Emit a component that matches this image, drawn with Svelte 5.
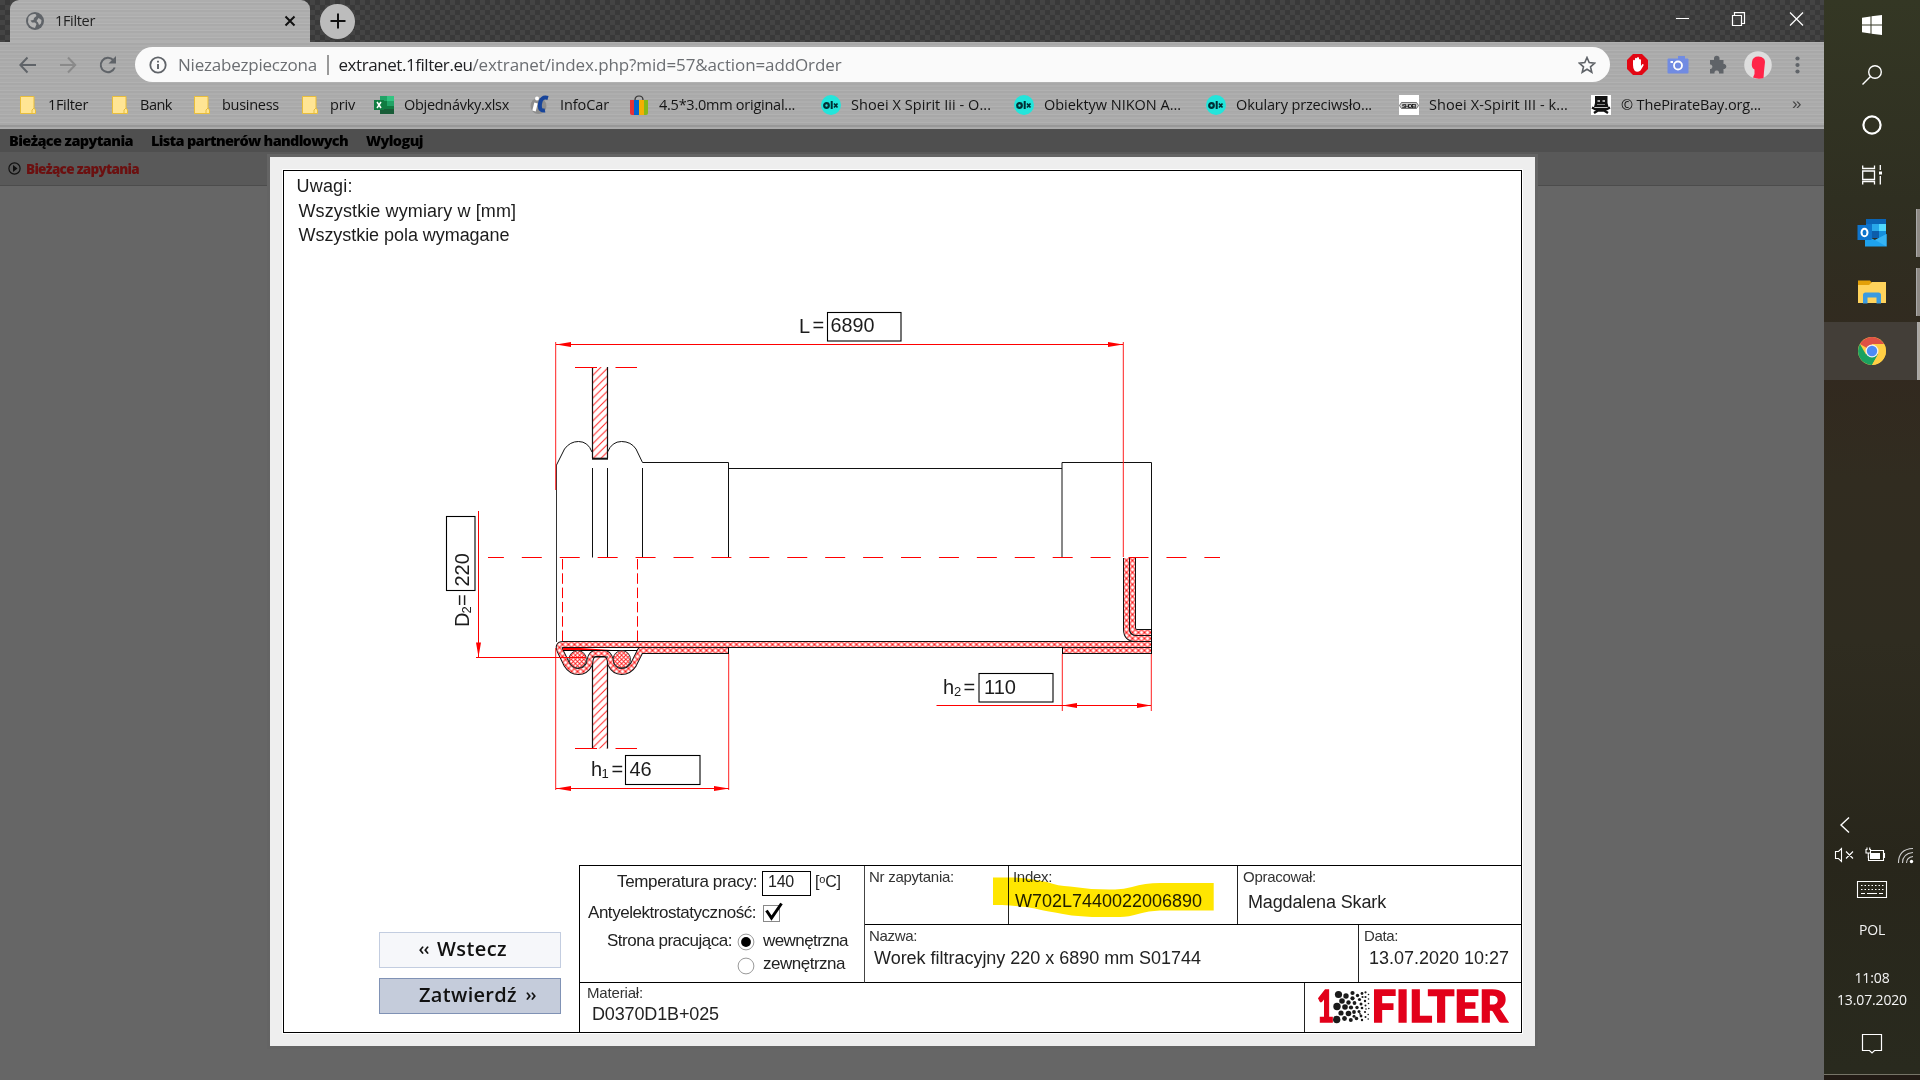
<script>
  // Spreads the letters of a label evenly so that it takes up the given width.
  function fit(node, width) {
    const natural = node.getBoundingClientRect().width;
    node.style.letterSpacing = (width - natural) / node.textContent.length + 'px';
  }

  const bookmarks = [
    { icon: 'folder', text: '1Filter', w: 40 },
    { icon: 'folder', text: 'Bank', w: 32 },
    { icon: 'folder', text: 'business', w: 57 },
    { icon: 'folder', text: 'priv', w: 25 },
    { icon: 'excel', text: 'Objednávky.xlsx', w: 105 },
    { icon: 'car', text: 'InfoCar', w: 49 },
    { icon: 'ebay', text: '4.5*3.0mm original...', w: 136 },
    { icon: 'olx', text: 'Shoei X Spirit Iii - O...', w: 140 },
    { icon: 'olx', text: 'Obiektyw NIKON A...', w: 137 },
    { icon: 'olx', text: 'Okulary przeciwsło...', w: 136 },
    { icon: 'shoei', text: 'Shoei X-Spirit III - k...', w: 139 },
    { icon: 'pirate', text: '© ThePirateBay.org...', w: 140 }
  ];

  // Particle cloud of the logo: x, y, radius.
  const dots = [
    [1338.5, 994.5, 3.6], [1346, 996, 2.7], [1352.5, 993, 2.1], [1357.5, 995.5, 1.7], [1362, 993.5, 1.4],
    [1342, 1001, 2.8], [1348.5, 1002.5, 2.2], [1352.5, 998.3, 2.1], [1359.5, 999.5, 1.6], [1365.5, 992.3, 1.1],
    [1337, 1006.5, 3.7], [1345, 1007, 2.8], [1351, 1007.5, 2.1], [1354.5, 1003, 1.9], [1357, 1007.5, 1.7],
    [1341, 1013, 2.6], [1348.5, 1013.5, 2.8], [1354, 1012, 1.9], [1359, 1011.5, 1.5], [1361, 1004, 1.5],
    [1336.7, 1019.5, 3.7], [1344.5, 1018.5, 2.4], [1350.8, 1020, 2], [1356.5, 1018.5, 1.8], [1354, 1016.3, 1.5],
    [1361, 1016, 1.4], [1362, 1020, 1.2], [1365, 1001, 1.2], [1365.5, 997, 1.1], [1362.5, 997, 1.1],
    [1362, 1008, 1.3], [1365.5, 1005.5, 1], [1365, 1012, 1.1], [1365.5, 1017, 1], [1368.5, 994.5, 0.8],
    [1368.5, 999, 0.8], [1368.5, 1003.5, 0.8], [1368.8, 1008.5, 0.8], [1368.2, 1014.5, 0.8], [1368.2, 1019, 0.8],
    [1360, 1013.8, 0.9], [1366, 1009, 0.8]
  ];

  const seal =
    'M729 650.5H640.5L633.5 664.5Q629 671.5 621.5 671.5Q614.5 671.5 610.8 664L610.3 660Q608.5 653.5 604 653.5H596Q591.5 653.5 590 660L589.5 664Q585.5 671.5 578.5 671.5Q571 671.5 566.8 664.5L560 650.5Q557.5 644.5 563 644.5H1151';
  const cap1 = 'M1126.5 558V629Q1126.5 638.5 1136 638.5H1151';
  const cap2 = 'M1132.5 558V628Q1132.5 632.5 1137 632.5H1151';
</script>

<div class="screen">
  <div class="browser">
    <div class="tabs">
      <div class="tab">
        <svg class="globe" width="18" height="18" viewBox="0 0 18 18"><circle cx="9" cy="9" r="9" fill="#5f6368" /><path d="M2.500 5Q5 1.500 9.500 2L10.500 4L8 6L7.500 8L4.500 8.500L6 10.500H9L10.500 12L9 16Q3 15 2 10ZM12.500 6L15.500 8L15 11.500L13 13L12 10.500L10.500 9Z" fill="#b5b5b5" /></svg>
        <span class="ui title" use:fit={40}>1Filter</span>
        <svg width="12" height="12" viewBox="0 0 12 12"><path d="M1.500 1.500L10.500 10.500M10.500 1.500L1.500 10.500" stroke="#111" stroke-width="2" /></svg>
      </div>
      <div class="plus"><svg width="16" height="16" viewBox="0 0 16 16"><path d="M8 0.500V15.500M0.500 8H15.500" stroke="#111" stroke-width="2" /></svg></div>
      <svg class="winctl" width="128" height="14" viewBox="0 0 128 14" fill="none" stroke="#fff" stroke-width="1.200"><path d="M0 6.500H13M114 0.500L127 13.500M127 0.500L114 13.500" /><path d="M56.500 3.500H65.500V13.500H56.500ZM58.500 3V0.700H68.500V11.500H66" /></svg>
    </div>

    <div class="toolbar">
      <svg class="nav" width="108" height="20" viewBox="0 0 108 20" fill="none" stroke-width="2">
        <path d="M17 10H1.500M8.500 2.500L1.300 10L8.500 17.500" stroke="#5f6368" />
        <path d="M41 10H56M49 2.500L56.200 10L49 17.500" stroke="#8a8a8a" />
        <path d="M94.200 5A7.200 7.200 0 1 0 95.700 12.500" stroke="#5f6368" /><path d="M97 1V8.500H89.500Z" fill="#5f6368" />
      </svg>
      <div class="address">
        <svg width="18" height="18" viewBox="0 0 18 18"><circle cx="9" cy="9" r="7.700" fill="none" stroke="#5f6368" stroke-width="1.800" /><path d="M9 8V13M9 4.800V6.600" stroke="#5f6368" stroke-width="1.900" /></svg>
        <span class="ui insecure" use:fit={139}>Niezabezpieczona</span>
        <i class="sep"></i>
        <span class="ui host" use:fit={134}>extranet.1filter.eu</span><span class="ui path" use:fit={369}>/extranet/index.php?mid=57&amp;action=addOrder</span>
        <svg class="star" width="18" height="18" viewBox="0 0 18 18"><path d="M9 1.500L11.200 6.600L16.700 7.100L12.500 10.800L13.800 16.200L9 13.300L4.200 16.200L5.500 10.800L1.300 7.100L6.800 6.600Z" fill="none" stroke="#5f6368" stroke-width="1.600" /></svg>
      </div>
      <svg class="ext" width="190" height="34" viewBox="1620 48 190 34">
        <path d="M1633 54H1642L1648 60V69L1642 75H1633L1627 69V60Z" fill="#e30613" />
        <path d="M1633 65V60.500Q1634 59 1635 60.500V58.500Q1636 57 1637 58.500V58Q1638 56 1639 58V59.500Q1640 58.500 1641 60V66L1642.500 64Q1644 63.500 1643.500 65.500L1640.500 70.500Q1637 73 1634.500 70.500Q1633 69 1633 65Z" fill="#fff" />
        <rect x="1667.500" y="58.500" width="21" height="15" rx="1" fill="#718be2" /><rect x="1678" y="56" width="7" height="3" fill="#718be2" /><rect x="1670.500" y="61" width="2.500" height="2" fill="#fff" /><circle cx="1678" cy="65.500" r="4" fill="#718be2" stroke="#fff" stroke-width="1.800" />
        <path d="M1710 60H1714V58.500A2.600 2.600 0 0 1 1719.500 58.500V60H1723.500V64H1724.500A2.600 2.600 0 0 1 1724.500 69H1723.500V73.500H1719V72A2.500 2.500 0 0 0 1714.500 72V73.500H1710V69H1711A2.500 2.500 0 0 0 1711 64.500H1710Z" fill="#5f6368" />
        <circle cx="1758" cy="65" r="13.800" fill="#dedede" /><path d="M1752 62Q1752.500 56.500 1758.500 56.500Q1765 57 1765 62L1764 71.500L1763.500 78Q1758 79.500 1753 77.500L1754.500 74V69.500Q1751 68 1752 62Z" fill="#ff2448" />
        <circle cx="1797.500" cy="58.500" r="2.100" fill="#5f6368" /><circle cx="1797.500" cy="65" r="2.100" fill="#5f6368" /><circle cx="1797.500" cy="71.500" r="2.100" fill="#5f6368" />
      </svg>
    </div>

    <div class="bookmarks">
      {#each bookmarks as b}
        <div class="bm">
          <svg width="20" height="20" viewBox="0 0 20 20">
            {#if b.icon === 'folder'}
              <path d="M2.500 1.500H16V13L17.500 15V18.500H2.500Z" fill="#ffe594" stroke="#e8bd3b" /><path d="M14 18.500V15L16 13" fill="none" stroke="#e8bd3b" />
            {:else if b.icon === 'excel'}
              <path d="M6 1H20V19H6Z" fill="#107c41" /><path d="M6 1H13V6H6Z" fill="#21a366" /><path d="M13 1H20V6H13Z" fill="#33c481" /><path d="M13 6H20V11H13Z" fill="#21a366" /><path d="M6 14H20V19H6Z" fill="#185c37" /><path d="M0 5H10V15H0Z" fill="#107c41" /><path d="M3 7L7 13M7 7L3 13" stroke="#fff" stroke-width="1.500" />
            {:else if b.icon === 'car'}
              <circle cx="8.500" cy="11" r="8" fill="#8e8e8e" /><path d="M6 8L4 16" stroke="#fff" stroke-width="3.500" /><circle cx="7" cy="3.500" r="2" fill="#fff" /><path d="M18 3Q11 1 10 9Q9 16.500 15 15.500" fill="none" stroke="#17449a" stroke-width="4" />
            {:else if b.icon === 'ebay'}
              <path d="M1 5H5.500V20H3Q1 20 1 18Z" fill="#e53238" /><path d="M5 5H10V20H5Z" fill="#0064d2" /><path d="M10 5H15V20H10Z" fill="#f5af02" /><path d="M15 5H19V18Q19 20 17 20H15Z" fill="#86b817" /><path d="M6 5Q6 1 10 1Q14 1 14 5" fill="none" stroke="#333" stroke-width="1.200" />
            {:else if b.icon === 'olx'}
              <circle cx="10" cy="10" r="10" fill="#23e5db" /><circle cx="5.500" cy="10.500" r="2.300" fill="none" stroke="#002f34" stroke-width="2.200" /><path d="M10.700 6V14" stroke="#002f34" stroke-width="2" /><path d="M13 8.500L16.500 12.500M16.500 8.500L13 12.500" stroke="#002f34" stroke-width="1.700" />
            {:else if b.icon === 'shoei'}
              <path d="M0 0H20V20H0Z" fill="#fff" /><path d="M2.500 7.500H17.500L19.500 10.500L17.500 13.500H2.500L0.500 10.500Z" fill="#ccc" stroke="#555" stroke-width="0.800" /><text x="3" y="12.500" font-size="5.500" font-weight="bold" textLength="14">SHOEI</text>
            {:else}
              <path d="M0 0H20V20H0Z" fill="#fff" /><path d="M4 1H16.500V8L17.500 12H3L4 8Z" fill="#111" /><path d="M6.500 5H9V7H6.500ZM11.500 5H14V7H11.500ZM6 9H14V9.800H6Z" fill="#aaa" /><path d="M1 12.500L4 14H16L19 12.500M3 18L7 15.500H13L17 18" fill="none" stroke="#111" stroke-width="2.400" />
            {/if}
          </svg>
          <span class="ui" use:fit={b.w}>{b.text}</span>
        </div>
      {/each}
      <span class="more">»</span>
    </div>

    <div class="page">
      <nav class="menu">
        <b use:fit={124}>Bieżące zapytania</b><b use:fit={197}>Lista partnerów handlowych</b><b use:fit={57}>Wyloguj</b>
      </nav>
      <div class="submenu">
        <svg width="13" height="13" viewBox="0 0 13 13"><circle cx="6.500" cy="6.500" r="5.600" fill="none" stroke="#111" stroke-width="1.200" /><path d="M5 3L9.500 6.500L5 10Z" fill="#111" /></svg>
        <b use:fit={113}>Bieżące zapytania</b>
      </div>

      <div class="modal">
        <div class="frame">
          <svg class="drawing" width="1237" height="694" viewBox="284 171 1237 694">
            <defs>
              <pattern id="cross" width="6" height="6" patternUnits="userSpaceOnUse" x="1.500" y="641.500"><path d="M-1 -1L7 7M7 -1L-1 7" stroke="#ff1010" stroke-width="1.050" /></pattern>
              <pattern id="fine" width="4.200" height="4.200" patternUnits="userSpaceOnUse"><path d="M-1 -1L5.200 5.200M5.200 -1L-1 5.200" stroke="#ff1a1a" stroke-width="0.900" /></pattern>
              <pattern id="wall" width="7.600" height="7.600" patternUnits="userSpaceOnUse" x="592.500" y="368"><path d="M-1 8.600L8.600 -1M-1 1L1 -1M6.600 8.600L8.600 6.600" stroke="#ff2020" stroke-width="1" /></pattern>
            </defs>

            <g class="lbl">
              <text x="296.500" y="192" textLength="56">Uwagi:</text>
              <text x="298.500" y="217" textLength="217.500">Wszystkie wymiary w [mm]</text>
              <text x="298.500" y="241" textLength="211">Wszystkie pola wymagane</text>
            </g>

            <path d="M592.500 367H607.500V458H592.500ZM592.500 657H607.500V748.500H592.500Z" fill="url(#wall)" />
            <g fill="none" stroke="#111" stroke-width="1">
              <path d="M556.500 465V642" stroke="#333" />
              <path d="M592.500 367V458M607.500 367V458M592.500 657V748.500M607.500 657V748.500" stroke-width="1.200" />
              <path d="M592 458.700H608" stroke-width="2" />
              <path d="M556.500 465L564.500 449Q570 441.500 578.500 441.500Q588 441.500 592 452M607.500 452Q612 441.500 621.500 441.500Q631 441.500 636 449L642.500 462.500H728.500V557.500M728.500 468.500H1062M1062 557.500V462.500H1151.500V654M592.500 468V557.500M607.500 468V557.500M642.500 468V557.500" />
              <path d="M1135.500 557.500V629.500M1129.500 557.500V629" />
            </g>

            <path class="ink" d="M1062 650.500H1151.500" /><path class="gap" d="M1063 650.500H1151" /><path class="hatch" d="M1063 650.500H1151" />
            <path class="ink" d={cap1} /><path class="gap" d={cap1} /><path class="hatch" d={cap1} />
            <path class="ink" d={cap2} /><path class="gap" d={cap2} /><path class="hatch" d={cap2} />
            <path class="ink" d={seal} /><path class="gap" d={seal} /><path class="hatch" d={seal} />
            <path d="M728.500 647V654M1062.500 647V654M1151.500 629V654M592 657H608M563 650.500H637" stroke="#000" />
            <path d="M563 648H580L612 650H563Z" fill="#f00" />
            <circle cx="577.700" cy="659.300" r="8.700" fill="url(#fine)" stroke="#333" stroke-width="1" />
            <circle cx="621.800" cy="659.300" r="8.700" fill="url(#fine)" stroke="#333" stroke-width="1" />

            <g fill="none" stroke="#f00" stroke-width="1">
              <path d="M555.700 342V490M555.700 648V790M728.700 654V790M1062.300 654V711M1151.300 654V711M1123.300 342V557" stroke="#ff2020" />
              <path d="M556 344.500H1123M556 788.500H729M936.500 705.500H1151M478.500 511V657M476 657.500H586" />
              <path d="M575 367.500H597M615.500 367.500H637M575 748.500H597M615.500 748.500H637" />
              <path d="M488 557.500H1220" stroke-dasharray="20 17.920" stroke-dashoffset="4.100" />
              <path d="M562.500 559V641M637.500 559V641" stroke-dasharray="10.500 3.800" />
            </g>
            <path d="M556 344.500L571 342V347ZM1123 344.500L1108 342V347ZM556 788.500L571 786V791ZM729 788.500L714 786V791ZM1062.500 705.500L1077 703V708ZM1151 705.500L1137 703V708ZM478.500 657L476 642.500H481Z" fill="#f00" />

            <g fill="#fff" stroke="#000" stroke-width="1.100">
              <rect x="827.500" y="312.500" width="73.500" height="28.500" />
              <rect x="979" y="673.500" width="74" height="28.500" />
              <rect x="625.500" y="755.500" width="74.500" height="29" />
              <rect x="446.500" y="516.500" width="28.500" height="74" />
            </g>
            <g class="dim">
              <text x="799" y="333">L</text><text x="812.500" y="332">=</text><text x="830.500" y="331.500" textLength="44" lengthAdjust="spacingAndGlyphs">6890</text>
              <text x="943" y="693.500">h</text><text class="sub" x="954" y="695.500">2</text><text x="963.500" y="693.500">=</text><text x="984" y="693.500" textLength="32" lengthAdjust="spacingAndGlyphs">110</text>
              <text x="591" y="776">h</text><text class="sub" x="601.500" y="777.500">1</text><text x="611.500" y="776">=</text><text x="629.500" y="775.500">46</text>
              <g transform="rotate(-90)"><text x="-627" y="469">D</text><text class="sub" x="-613.500" y="471">2</text><text x="-606" y="469">=</text><text x="-586.500" y="468.500">220</text></g>
            </g>
          </svg>

          <div class="bottom">
            <div class="buttons">
              <button class="back"><i>‹‹</i><span use:fit={70}>Wstecz</span></button>
              <button class="ok"><span use:fit={98}>Zatwierdź</span><i>››</i></button>
            </div>
            <div class="block">
              <div class="params">
                <div class="row temp"><span use:fit={140}>Temperatura pracy:</span><div class="inp"><span use:fit={26}>140</span></div><span class="deg">[<small>o</small>C]</span></div>
                <div class="row anti"><span use:fit={168}>Antyelektrostatyczność:</span><svg width="22" height="22" viewBox="0 0 22 22"><rect x="1.500" y="4.500" width="16" height="16" fill="#fff" stroke="#888" /><path d="M4.500 9.500L9.500 17L19.500 2.500" fill="none" stroke="#000" stroke-width="3" /></svg></div>
                <div class="row side"><span use:fit={125}>Strona pracująca:</span><svg width="18" height="18" viewBox="0 0 18 18"><circle cx="9" cy="9" r="7.900" fill="#fff" stroke="#999" /><circle cx="9" cy="9" r="4.900" /></svg><span class="opt" use:fit={85}>wewnętrzna</span></div>
                <div class="row side2"><svg width="18" height="18" viewBox="0 0 18 18"><circle cx="9" cy="9" r="7.900" fill="#fff" stroke="#999" /></svg><span class="opt" use:fit={82}>zewnętrzna</span></div>
              </div>
              <div class="info">
                <div class="r1">
                  <div class="cell"><span class="cap" use:fit={85}>Nr zapytania:</span></div>
                  <div class="cell"><span class="cap" use:fit={39}>Index:</span><span class="val" use:fit={187}>W702L7440022006890</span></div>
                  <div class="cell"><span class="cap" use:fit={73}>Opracował:</span><span class="val" use:fit={138}>Magdalena Skark</span></div>
                </div>
                <div class="r2">
                  <div class="cell"><span class="cap" use:fit={48}>Nazwa:</span><span class="val" use:fit={327}>Worek filtracyjny 220 x 6890 mm S01744</span></div>
                  <div class="cell"><span class="cap" use:fit={34}>Data:</span><span class="val" use:fit={140}>13.07.2020 10:27</span></div>
                </div>
              </div>
              <div class="cell material"><span class="cap" use:fit={56}>Materiał:</span><span class="val" use:fit={127}>D0370D1B+025</span></div>
              <div class="logo">
                <svg width="216" height="49" viewBox="1305 983 216 49">
                  <text class="brand" x="1317" y="1022" textLength="17" lengthAdjust="spacingAndGlyphs">1</text>
                  {#each dots as [x, y, r]}<circle cx={x} cy={y} {r} fill="#1a1a1a" />{/each}
                  <text class="brand" x="1371.500" y="1022" textLength="136" lengthAdjust="spacingAndGlyphs">FILTER</text>
                </svg>
              </div>
              <svg class="marker" width="222" height="44" viewBox="992 875 222 44"><path d="M993 877.500L1014 877.500Q1030 878 1047 882Q1058 886 1070 886.500Q1092 890 1115 889.500Q1124 889 1132 887Q1145 883 1160 883H1213.700V910.500H1160Q1148 911 1140 913.500Q1128 917 1120 917H1092Q1070 916 1055 912.500Q1042 910.500 1035 908.500Q1020 906 1002 905H993Z" fill="#ffe600" /></svg>
            </div>
          </div>
        </div>
      </div>
    </div>
  </div>

  <aside class="taskbar">
    <div class="slot"><svg width="20" height="20" viewBox="0 0 20 20" fill="#fff"><path d="M0 2.800L8.500 1.500V9.500H0ZM9.500 1.300L20 0V9.500H9.500ZM0 10.500H8.500V18.500L0 17.200ZM9.500 10.500H20V20L9.500 18.700Z" /></svg></div>
    <div class="slot"><svg width="20" height="20" viewBox="0 0 20 20" fill="none" stroke="#fff" stroke-width="1.400"><circle cx="13" cy="7" r="6.300" /><path d="M8.500 11.500L0.500 19.500" /></svg></div>
    <div class="slot"><svg width="20" height="20" viewBox="0 0 20 20"><circle cx="10" cy="10" r="8.600" fill="none" stroke="#fff" stroke-width="2.200" /></svg></div>
    <div class="slot"><svg width="20" height="20" viewBox="0 0 20 20" fill="none" stroke="#fff" stroke-width="1.300"><path d="M0.700 0.500V3.500H12.500V0.500M0.700 6H12.500V14.500H0.700ZM0.700 19.500V16.500H12.500V19.500M18.300 0V5M18.300 11V19.500" /><path d="M17 6.500H20V9.500H17Z" fill="#fff" stroke="none" /></svg></div>
    <div class="slot app"><svg width="30" height="30" viewBox="0 0 30 30"><path d="M9 1H29V15H9Z" fill="#0a64b5" /><path d="M9 6H15V20H9Z" fill="#1272c4" /><path d="M15 6H22V13H15Z" fill="#28a8ea" /><path d="M22 6H29V13H22Z" fill="#50d9ff" /><path d="M15 13H22V20H15Z" fill="#0c5dab" /><path d="M22 13H29V20H22Z" fill="#1490df" /><path d="M8 17L18 22L29.500 16V28.500H8Z" fill="#1ea2ee" /><path d="M18 22L29.500 16V28.500Z" fill="#36b4f5" /><path d="M0.500 7H14.500V22H0.500Z" fill="#0f74cc" /><ellipse cx="7.500" cy="14.500" rx="3" ry="3.700" fill="none" stroke="#fff" stroke-width="2" /></svg><i></i></div>
    <div class="slot app"><svg width="28" height="24" viewBox="0 0 28 24"><path d="M0 0.500H12L14 3V6H0Z" fill="#e3a008" /><path d="M0 5H11L14 2H28V23H0Z" fill="#ffd35c" /><path d="M5 23.500V15Q5 12.500 7.500 12.500H20.500Q23 12.500 23 15V23.500H18.500V17.500H9.500V23.500Z" fill="#3a9be0" /></svg><i></i></div>
    <div class="slot app active"><svg width="28" height="28" viewBox="0 0 28 28"><circle cx="14" cy="14" r="14" fill="#ffce44" /><path d="M14 14L1.900 7A14 14 0 0 1 26.100 7H14Z" fill="#de5145" /><path d="M1.900 7A14 14 0 0 0 14 28L20 17.500L14 14L8 17.500Z" fill="#1aa260" /><path d="M14 7H26.100A14 14 0 0 1 14 28L20 17.500Z" fill="#ffce44" /><circle cx="14" cy="14" r="6.500" fill="#f1f1f1" /><circle cx="14" cy="14" r="5.200" fill="#4c8bf5" /></svg><i></i></div>

    <svg class="tray" width="96" height="92" viewBox="1824 812 96 92" fill="none" stroke="#fff" stroke-width="1.100">
      <path d="M1849 817.500L1841 825L1849 832.500" stroke-width="1.400" />
      <path d="M1835.500 851.500H1838.500L1841.500 848.500V861.500L1838.500 858.500H1835.500ZM1846 851.500L1853 858.500M1853 851.500L1846 858.500" />
      <path d="M1871 850.500H1883.500V860.500H1868.500V856M1884.500 853V858M1866 849V853H1870.500V849M1868.300 853V858M1867 847.500V850M1869.700 847.500V850" /><path d="M1870 853H1880V859H1870Z" fill="#fff" stroke="none" />
      <path d="M1898.500 863Q1898.500 849 1913 848.500M1902.500 863Q1902.500 853.500 1913 852.500M1906.500 863Q1906.500 857.500 1913 856.500" stroke="#d0d0d0" /><circle cx="1911.500" cy="861.500" r="1.700" fill="#fff" stroke="none" />
      <path d="M1857.500 881.500H1886.500V897.500H1857.500Z" /><path d="M1861 885.500H1884M1861 889.500H1884" stroke-dasharray="1.500 2" /><path d="M1861 893.500H1865M1867 893.500H1877M1879 893.500H1883" />
    </svg>
    <span class="lang" use:fit={26}>POL</span>
    <span class="time" use:fit={35}>11:08</span>
    <span class="date" use:fit={70}>13.07.2020</span>
    <svg class="note" width="22" height="22" viewBox="0 0 22 22"><path d="M1.500 1.500H20.500V17.500H13.500L11 20L8.500 17.500H1.500Z" fill="none" stroke="#fff" stroke-width="1.200" /></svg>
    <div class="peek"></div>
  </aside>
</div>

<style>
  :global(body) { margin: 0; overflow: hidden; background: #666; }
  .screen { display: flex; width: 1920px; height: 1080px; font-family: "Liberation Sans", Arial, sans-serif; }
  svg { display: block; flex: none; }
  span, b { white-space: nowrap; display: inline-block; flex: none; }
  .ui { font-family: "Segoe UI", "Open Sans", "Noto Sans", sans-serif; }

  .browser { width: 1824px; display: flex; flex-direction: column; background: repeating-linear-gradient(180deg, #ababab 0 2px, #b1b1b1 2px 3px, #a8a8a8 3px 5px, #aeaeae 5px 7px, #a9a9a9 7px 8px); }
  .tabs { height: 42px; display: flex; align-items: center; background: repeating-conic-gradient(#393939 0 25%, #444 0 50%) 0 0 / 10px 10px; }
  .tab { width: 300px; height: 42px; margin-left: 10px; box-sizing: border-box; padding: 0 14px 0 16px; display: flex; align-items: center; border-radius: 9px 9px 0 0; background: repeating-linear-gradient(180deg, #adadad 0 2px, #b4b4b4 2px 3px, #aaa 3px 5px, #b0b0b0 5px 7px); }
  .title { margin: -2px auto 0 11px; font-size: 14.5px; color: #222; }
  .plus { width: 35px; height: 35px; margin-left: 10px; border-radius: 50%; background: #bcbcbc; display: grid; place-items: center; }
  .winctl { margin: -5px 20px 0 auto; }

  .toolbar { height: 45px; display: flex; align-items: center; }
  .nav { margin-left: 19px; }
  .address { width: 1475px; height: 35px; margin-left: 8px; border-radius: 18px; background: #fafafa; display: flex; align-items: center; font-size: 17px; box-sizing: border-box; padding: 0 14px; color: #6b6e72; }
  .insecure { margin-left: 11px; }
  .sep { width: 1.5px; height: 20px; margin: 0 10px; background: #999; }
  .host { color: #202124; }
  .star { margin-left: auto; }
  .ext { margin-left: 10px; }

  .bookmarks { height: 40px; padding: 0 0 3px 18px; box-sizing: border-box; display: grid; grid-template-columns: 92px 82px 108px 74px 156px 99px 192px 193px 192px 193px 192px 201px 12px; align-items: center; font-size: 14.5px; color: #151515; border-bottom: 2px solid #979797; }
  .bm { display: flex; align-items: center; gap: 10px; }
  .bm span { margin-top: -1px; }
  .more { font-size: 17px; color: #444; margin-top: -2px; }

  .page { position: relative; height: 951px; margin-top: 2px; background: #666; font-family: Tahoma, "DejaVu Sans Condensed", "DejaVu Sans", sans-serif; }
  .menu { height: 23px; background: #4f4f4f; display: flex; align-items: center; gap: 18px; padding-left: 9px; font: bold 14.5px "Open Sans", sans-serif; color: #000; }
  .submenu { height: 33px; background: #595959; border-bottom: 1px solid #4c4c4c; display: flex; align-items: center; gap: 5px; padding-left: 8px; font: bold 13.5px "Open Sans", sans-serif; color: #6b1010; }

  .modal { position: absolute; left: 270px; top: 28px; width: 1265px; height: 889px; box-sizing: border-box; padding: 13px; background: #eee; box-shadow: 0 0 0 3px #646464; font-family: "Liberation Sans", Arial, sans-serif; }
  .frame { width: 1239px; height: 863px; box-sizing: border-box; border: 1px solid #000; background: #fff; display: flex; flex-direction: column; box-shadow: 0 0 0 1px #fff; }
  .lbl { font-size: 18px; fill: #1c1c1c; }
  .dim { font-size: 20px; fill: #1c1c1c; }
  .sub { font-size: 13px; }
  .ink, .gap, .hatch { fill: none; stroke-linejoin: round; }
  .ink { stroke: #111; stroke-width: 7; }
  .gap { stroke: #fff; stroke-width: 5; }
  .hatch { stroke: url(#cross); stroke-width: 5; }

  .bottom { height: 167px; display: flex; }
  .buttons { width: 277px; padding: 67px 0 0 95px; margin-right: 18px; box-sizing: border-box; display: flex; flex-direction: column; gap: 10px; }
  button { width: 182px; height: 36px; padding: 0; border: 1px solid #c3cde0; background: #f6f7fa; font: 600 20px "Trebuchet MS", "Open Sans", sans-serif; color: #111; display: flex; align-items: center; }
  button i { font-style: normal; font-size: 18px; letter-spacing: -1px; width: 11px; }
  .back { padding-left: 38px; gap: 8px; }
  .ok { padding-left: 39px; gap: 8px; background: #c5ccdb; border-color: #8092b5; }
  .back span, .back i, .ok span, .ok i { margin-top: -4px; }

  .block { position: relative; width: 942px; height: 167px; box-sizing: border-box; border: solid #000; border-width: 1px 0 0 1px; display: grid; grid-template-columns: 285px 440px 216px; grid-template-rows: 117px 49px; color: #222; }
  .params { border-bottom: 1px solid #000; border-right: 1px solid #444; font-size: 17px; height: 116px; }
  .row { display: flex; align-items: center; }
  .temp { height: 30px; padding: 2px 0 0 37px; }
  .inp { height: 23px; border: 1px solid #000; margin: 1px 4px 0 5px; padding-left: 5px; width: 42px; line-height: 20px; font-size: 16px; }
  .deg { font-size: 16px; letter-spacing: -.2px; margin-top: -3px; }
  .temp > span:first-child { margin-top: -3px; }
  .deg small { font-size: 11px; vertical-align: 4px; }
  .anti { height: 30px; padding-left: 8px; gap: 6px; }
  .anti svg { margin-top: -2px; }
  .side { height: 26px; padding-left: 27px; gap: 5px; }
  .side svg { margin-top: 2px; }
  .side .opt { margin-left: 3px; }
  .side2 { height: 22px; padding-left: 157px; gap: 8px; margin-top: -1px; }
  .side2 svg { margin-top: 3px; }
  .info { grid-column: 2 / 4; height: 117px; display: flex; flex-direction: column; }
  .r1, .r2 { display: grid; box-sizing: border-box; border-bottom: 1px solid #000; }
  .r1 { height: 59px; grid-template-columns: 144px 229px 283px; }
  .r2 { height: 58px; grid-template-columns: 494px 162px; }
  .cell { display: flex; flex-direction: column; align-items: flex-start; padding: 2px 0 0 4px; box-sizing: border-box; border-right: 1px solid #222; }
  .r1 .cell:last-child, .r2 .cell:last-child { border-right: 0; padding-left: 5px; }
  .cap { font-size: 15px; line-height: 17px; color: #333; }
  .val { font-size: 18px; line-height: 22px; margin: 3px 0 0 5px; }
  .r1 .val { margin-top: 6px; }
  .r1 .cell:nth-child(2) .val { margin: 5px 0 0 2px; }
  .material { grid-column: 1 / 3; padding: 1px 0 0 7px; }
  .material .val { margin-top: 2px; }
  .logo svg { overflow: visible; }
  .brand { font: 900 43px Lato, sans-serif; fill: #e2001a; stroke: #e2001a; stroke-width: 1.6px; }
  .marker { position: absolute; left: 412px; top: 9px; mix-blend-mode: multiply; }

  .taskbar { width: 96px; height: 1080px; display: flex; flex-direction: column; align-items: center; color: #f4f4f4; font-family: "Segoe UI", "Open Sans", sans-serif; background: linear-gradient(180deg, #343724 0, #2f2f21 200px, #32291f 370px, #312c20 480px, #2f2c20 640px, #28261b 860px, #292a1e 1070px); }
  .slot { width: 96px; height: 50px; flex: none; display: grid; place-items: center; position: relative; }
  .app { height: 59px; }
  .app svg { margin-top: -1px; }
  .app:nth-child(5) { margin-top: 4px; }
  .active { height: 58px; background: #433e38; }
  .app i { position: absolute; right: 0; top: 5px; width: 4px; height: 48px; background: #8d8984; border-left: 1px solid #aaa; box-sizing: border-box; }
  .active i { top: 0; height: 58px; width: 3px; background: #aaa6a0; }
  .tray { margin-top: auto; }
  .lang, .time, .date { font-size: 14px; line-height: 22px; }
  .lang { margin-top: 15px; }
  .time { margin-top: 26px; }
  .date { margin-top: 0; }
  .note { margin-top: 22px; margin-bottom: 19px; }
  .peek { width: 96px; height: 5px; flex: none; border-top: 1px solid #777568; background: #221b15; }
</style>
